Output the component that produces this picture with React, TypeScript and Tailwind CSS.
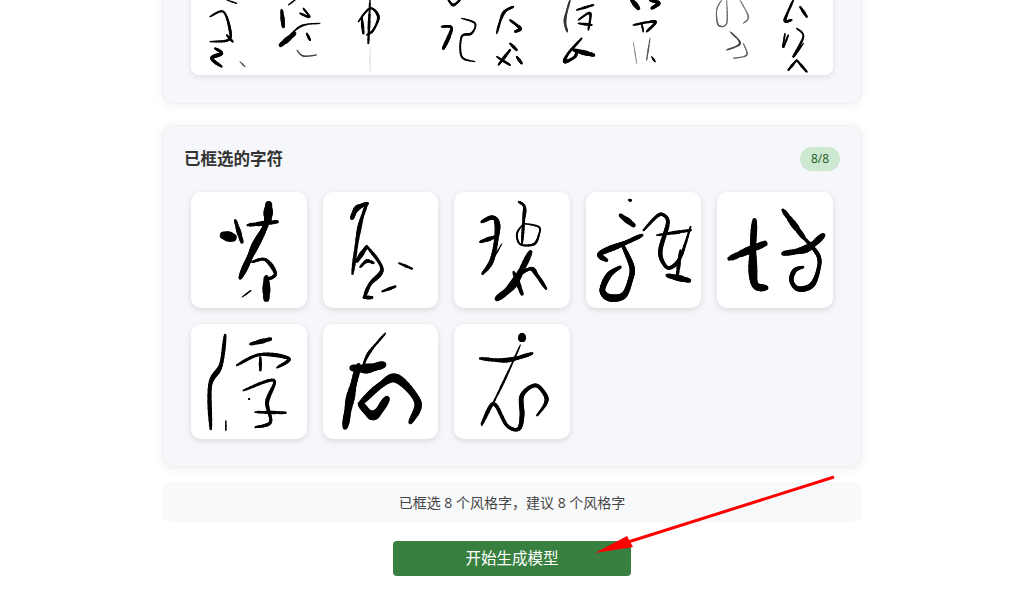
type Stroke = [string, number, string?];

const cells: { vb: string; s: Stroke[] }[] = [
  {
    vb: "93 216 345 345",
    s: [
      ["M325 250 L318 310 L285 375 L262 425 L240 472", 19],
      ["M325 250 L322 300", 24],
      ["M262 315 L350 305", 12],
      ["M188 345 L218 352", 26],
      ["M225 300 L245 365", 12],
      ["M275 425 L315 418 L345 460 L318 478", 10],
      ["M318 470 L318 535", 20],
      ["M245 530 L272 510", 4],
    ],
  },
  {
    vb: "489 216 345 345",
    s: [
      ["M622 250 L590 265 L575 295", 14],
      ["M620 250 L597 325 L577 460", 11],
      ["M620 378 L590 422", 12],
      ["M620 378 L665 445 L630 490 L612 530", 11],
      ["M600 440 L620 422 L640 428", 9],
      ["M610 531 L635 531", 10],
      ["M715 428 L755 445", 7],
      ["M665 513 L705 498", 8],
    ],
  },
  {
    vb: "12 216 345 345",
    s: [
      ["M95 305 L125 292 L140 305 L140 345 L125 420 L97 460", 14],
      ["M90 365 L135 350", 11],
      ["M155 370 L132 410", 4],
      ["M205 245 L222 260 L220 300 L215 370", 9],
      ["M220 310 L265 320 L265 345 L250 372 L210 372 L200 340 L220 310", 6],
      ["M240 395 L190 490 L140 535", 20],
      ["M190 455 L215 520", 12],
      ["M195 470 L240 445 L260 465 L287 505", 11],
    ],
  },
  {
    vb: "408 216 345 345",
    s: [
      ["M536 240 L542 241", 7],
      ["M510 285 L550 315", 15],
      ["M575 345 L520 370 L450 400 L470 420", 15],
      ["M520 380 L545 440 L540 480 L520 525 L480 532 L458 515 L462 490 L480 460 L510 440", 18],
      ["M580 330 L620 288 L640 285 L652 310 L630 390 L640 430 L660 442 L690 410 L720 320", 11],
      ["M620 345 L720 330", 9],
      ["M650 465 L715 480", 16],
      ["M690 390 L680 470", 10],
    ],
  },
  {
    vb: "803 216 345 345",
    s: [
      ["M915 300 L910 400 L915 490 L950 502", 22],
      ["M840 415 L945 370", 20],
      ["M1000 270 L1060 350", 16],
      ["M1000 400 L1070 385 L1120 345", 19],
      ["M1060 350 L1105 405 L1105 450 L1085 495 L1045 505 L1025 480 L1035 450 L1060 440", 14],
    ],
  },
  {
    vb: "93 27 345 345",
    s: [
      ["M195 60 L182 150 L150 210 L152 340", 13],
      ["M270 87 L330 72", 12],
      ["M230 150 L300 118 L385 130 L350 157", 10],
      ["M300 125 L300 165", 8],
      ["M250 225 L340 195 L320 260 L330 320 L285 335", 10],
      ["M285 290 L375 292", 9],
      ["M197 315 L197 345", 4],
      ["M265 250 L268 252", 4],
    ],
  },
  {
    vb: "489 27 345 345",
    s: [
      ["M675 55 L625 115 L605 165", 8],
      ["M595 150 L570 250 L555 335", 22],
      ["M575 158 L620 160 L670 148", 24],
      ["M600 265 L660 210 L710 190 L772 260 L750 320", 22],
      ["M600 265 L640 300 L680 250", 24],
    ],
  },
  {
    vb: "882 27 345 345",
    s: [
      ["M1085 62 L1085 72", 20],
      ["M960 130 L1040 135 L1115 115", 12],
      ["M1080 90 L1030 200 L965 330", 6],
      ["M965 325 L1000 265 L1040 330 L1075 340 L1085 300 L1085 240 L1125 210 L1155 240 L1155 265 L1130 300", 12],
    ],
  },
];

const stripLeft: Stroke[] = [
  ["M150 50 L190 35 L210 90 L205 120 L150 125", 7],
  ["M200 105 L218 125", 7],
  ["M165 145 L185 160 L155 175 L185 200", 10],
  ["M240 185 L255 200", 4, "#666"],
  ["M200 0 L230 10", 4],
  ["M365 30 L370 80", 11],
  ["M480 70 L420 80 L360 138", 5],
  ["M405 100 L362 135", 14],
  ["M430 25 L447 50 L420 40", 7],
  ["M440 100 L450 120", 7],
  ["M410 150 L430 168 L470 165", 4, "#444"],
  ["M385 15 L405 0", 4],
  ["M630 0 L625 130", 7],
  ["M595 65 L630 25 L655 50 L640 90 L620 105", 7],
  ["M605 50 L610 100", 8],
  ["M630 140 L630 215", 3, "#ddd"],
  ["M845 80 L875 85 L850 145 L870 110", 9],
  ["M905 55 L945 70 L935 100 L905 110 L905 170 L945 185", 6],
  ["M865 0 L880 15 L900 0", 7],
  ["M1010 100 L1030 40 L1060 20", 8],
  ["M1015 195 L1050 150", 8],
  ["M1010 170 L1050 195", 7],
];

const stripRight: Stroke[] = [
  ["M0 60 L30 85 L15 95", 9],
  ["M0 130 L20 150", 8],
  ["M20 170 L35 190", 8],
  ["M180 0 L165 60 L172 95", 7, "#333"],
  ["M200 30 L250 15", 7],
  ["M205 60 L240 40 L235 90", 7],
  ["M205 70 L245 75", 7],
  ["M215 115 L175 160 L165 185 L195 170 L200 150", 9],
  ["M190 150 L250 165", 13],
  ["M365 0 L385 25", 13],
  ["M420 0 L445 10 L425 25", 11],
  ["M370 75 L435 65 L410 95", 8],
  ["M395 70 L400 95", 5],
  ["M370 125 L380 190", 3, "#888"],
  ["M420 115 L410 180", 4, "#555"],
  ["M425 170 L435 185", 5],
  ["M635 0 L620 30 L625 75 L650 70 L650 0", 4, "#666"],
  ["M690 0 L715 50 L700 70", 4, "#777"],
  ["M660 95 L690 130 L650 150", 5, "#444"],
  ["M700 130 L710 165 L670 175", 4, "#666"],
  ["M850 0 L825 60 L845 60", 8],
  ["M870 20 L890 50", 8],
  ["M825 100 L820 140 L835 105", 6],
  ["M860 85 L880 110 L850 170 L880 130", 6],
  ["M860 180 L835 210", 7],
  ["M860 180 L890 215", 7],
];

// Brush trace: smooth the points and vary the width along the stroke.
function brush(d: string, w: number) {
  const n = (d.match(/-?\d+(\.\d+)?/g) ?? []).map(Number);
  const p: [number, number][] = [];
  for (let i = 0; i + 1 < n.length; i += 2) p.push([n[i], n[i + 1]]);
  const out: [number, number][] = [];
  const steps = 8;
  for (let i = 0; i < p.length - 1; i++) {
    const a = p[Math.max(i - 1, 0)];
    const b = p[i];
    const c = p[i + 1];
    const e = p[Math.min(i + 2, p.length - 1)];
    for (let k = 0; k < steps; k++) {
      const t = k / steps;
      const f = (q: number) =>
        0.5 *
        (2 * b[q] +
          (c[q] - a[q]) * t +
          (2 * a[q] - 5 * b[q] + 4 * c[q] - e[q]) * t * t +
          (3 * b[q] - a[q] - 3 * c[q] + e[q]) * t * t * t);
      out.push([f(0), f(1)]);
    }
  }
  out.push(p[p.length - 1]);
  return out.slice(0, -1).map((q, i) => {
    const r = out[i + 1];
    const t = i / (out.length - 1);
    return {
      d: `M${q[0].toFixed(1)} ${q[1].toFixed(1)}L${r[0].toFixed(1)} ${r[1].toFixed(1)}`,
      w: w * (0.6 + 0.5 * Math.sin(Math.PI * t) + 0.12 * Math.sin(t * 17)),
    };
  });
}

function Ink({ strokes }: { strokes: Stroke[] }) {
  return (
    <>
      {strokes.flatMap(([d, w, c], i) =>
        brush(d, w).map((s, j) => (
          <path key={`${i}-${j}`} d={s.d} fill="none" stroke={c ?? "#000"} strokeWidth={s.w} strokeLinecap="round" />
        )),
      )}
    </>
  );
}

export default function App() {
  return (
    <div
      className="relative h-[590px] w-full overflow-hidden bg-white"
      style={{ fontFamily: '"Open Sans", "Noto Sans CJK SC", sans-serif' }}
    >
      <div className="mx-auto -mt-[201px] flex w-[700px] flex-col">
        <section className="rounded-xl border border-[#eef0f3] bg-[#f5f7fa] px-[28px] pb-[28px] pt-[28px] shadow-[0_2px_10px_rgba(0,0,0,0.06)]">
          <div className="flex h-[247px] items-end overflow-hidden rounded-lg bg-white shadow-[0_2px_6px_rgba(0,0,0,0.1)]">
            <svg viewBox="93 0 1926 225" className="block h-[75px] w-[642px] blur-[0.4px]">
              <Ink strokes={stripLeft} />
              <g transform="translate(1050 0)">
                <Ink strokes={stripRight} />
              </g>
            </svg>
          </div>
        </section>

        <section className="mt-[21px] rounded-xl border border-[#eef0f3] bg-[#f5f7fa] px-[20px] pb-[27px] pt-[21px] shadow-[0_2px_10px_rgba(0,0,0,0.07)]">
          <div className="mb-[21px] flex h-[24px] items-center justify-between px-px">
            <h2 className="text-[16.5px] font-semibold leading-[24px] text-[#333]">已框选的字符</h2>
            <span className="flex h-[24px] w-[40px] items-center justify-center rounded-full bg-[#cde8d0] text-[12px] text-[#1b5e20]">
              8/8
            </span>
          </div>
          <div className="grid grid-cols-5 gap-[16px] px-[8px]">
            {cells.map((c, i) => (
              <div
                key={i}
                className="aspect-square overflow-hidden rounded-[10px] bg-white shadow-[0_2px_6px_rgba(0,0,0,0.12)]"
              >
                <svg viewBox={c.vb} className="block h-full w-full blur-[0.3px]">
                  <Ink strokes={c.s} />
                </svg>
              </div>
            ))}
          </div>
        </section>

        <div className="mt-[15px] flex h-[40px] items-center justify-center rounded-lg bg-[#f8f9fa] text-[14px] text-[#444] shadow-[0_1px_3px_rgba(0,0,0,0.02)]">
          已框选 8 个风格字，建议 8 个风格字
        </div>

        <button className="mx-auto mt-[19px] flex h-[35px] w-[238px] items-center justify-center rounded-[4px] bg-[#388040] text-[15.5px] text-white">
          开始生成模型
        </button>
      </div>

      <svg
        className="pointer-events-none absolute left-0 top-0"
        width="1024"
        height="590"
        viewBox="0 0 1024 590"
      >
        <line x1="834" y1="477" x2="625" y2="543" stroke="#f00" strokeWidth="3" />
        <polygon points="595,553 627,536 633,547" fill="#f00" />
      </svg>
    </div>
  );
}
